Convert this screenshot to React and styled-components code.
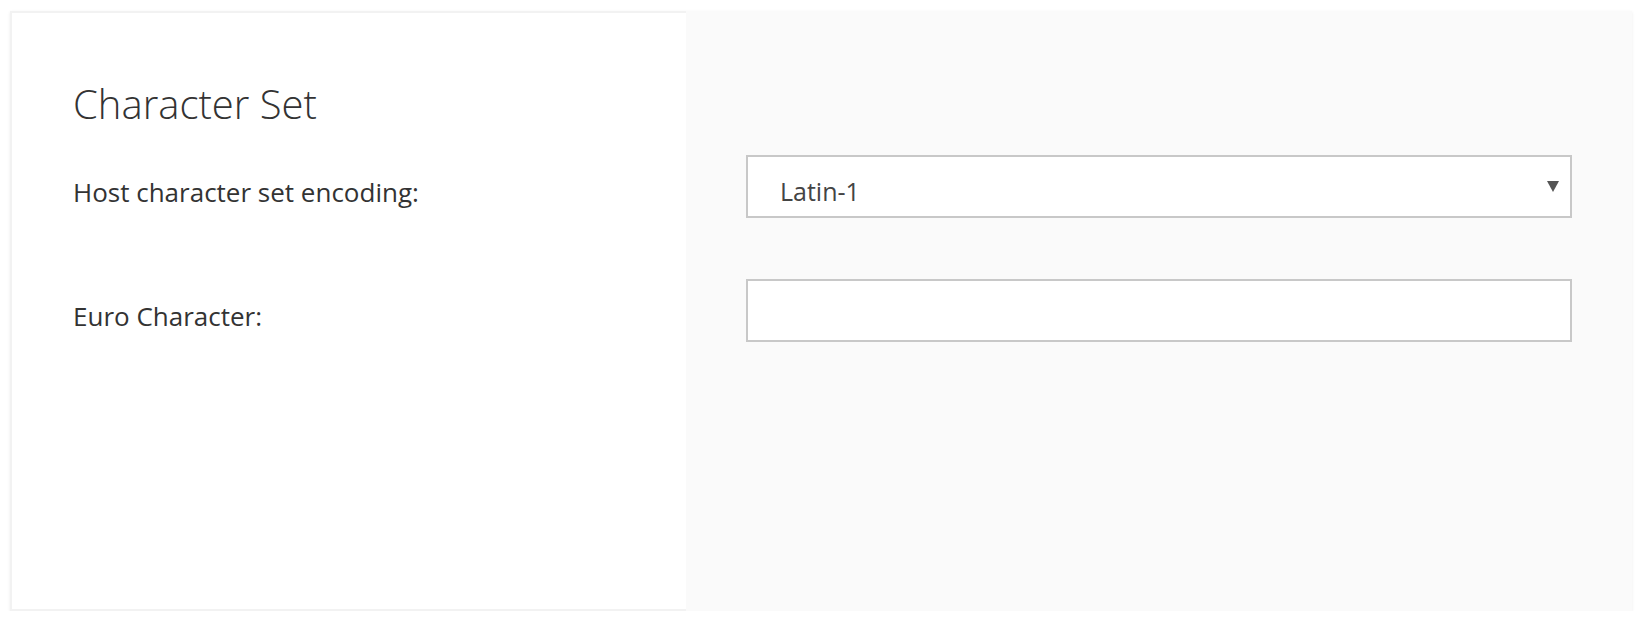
import React from 'react';
import styled, { createGlobalStyle } from 'styled-components';

const GlobalStyle = createGlobalStyle`
  html, body {
    margin: 0;
    padding: 0;
    background: #fff;
    font-family: "Open Sans", "Noto Sans", sans-serif;
  }
  * {
    box-sizing: border-box;
  }
`;

const Page = styled.div`
  padding: 11px 8px 0 10px;
`;

const Card = styled.div`
  display: flex;
  height: 600px;
  box-shadow: 0 1px 3px rgba(0, 0, 0, 0.08);
`;

const LabelColumn = styled.div`
  width: 676px;
  background: #fff;
  border: 2px solid #f2f2f2;
  border-right: none;
  padding: 64px 0 0 61px;
  display: flex;
  flex-direction: column;
`;

const Title = styled.h2`
  margin: 0 0 24px;
  font-size: 40px;
  font-weight: 300;
  line-height: 54px;
  color: #333;
`;

const Label = styled.div`
  height: 63px;
  padding-top: 10px;
  margin-bottom: 61px;
  display: flex;
  align-items: center;
  font-size: 26px;
  line-height: 34px;
  color: #333;
`;

const FieldColumn = styled.div`
  flex: 1;
  background: #fafafa;
  padding: 144px 60px 0;
  display: flex;
  flex-direction: column;
  gap: 61px;
`;

const Field = styled.div`
  height: 63px;
  background: #fff;
  border: 2px solid #c8c8c8;
  display: flex;
  align-items: center;
  justify-content: space-between;
  padding: ${({ $select }) => ($select ? '8px 11px 0 32px' : '0 32px')};
  font-size: 25px;
  line-height: 34px;
  color: #444;
`;

const Arrow = styled.svg`
  width: 12px;
  height: 11px;
  margin-top: -8px;
  fill: #555;
`;

const App = () => {
  return (
    <>
      <GlobalStyle />
      <Page>
        <Card>
          <LabelColumn>
            <Title>Character Set</Title>
            <Label>Host character set encoding:</Label>
            <Label>Euro Character:</Label>
          </LabelColumn>
          <FieldColumn>
            <Field $select>
              <span>Latin-1</span>
              <Arrow viewBox="0 0 12 11">
                <polygon points="0,0 12,0 6,11" />
              </Arrow>
            </Field>
            <Field />
          </FieldColumn>
        </Card>
      </Page>
    </>
  );
};

export default App;
